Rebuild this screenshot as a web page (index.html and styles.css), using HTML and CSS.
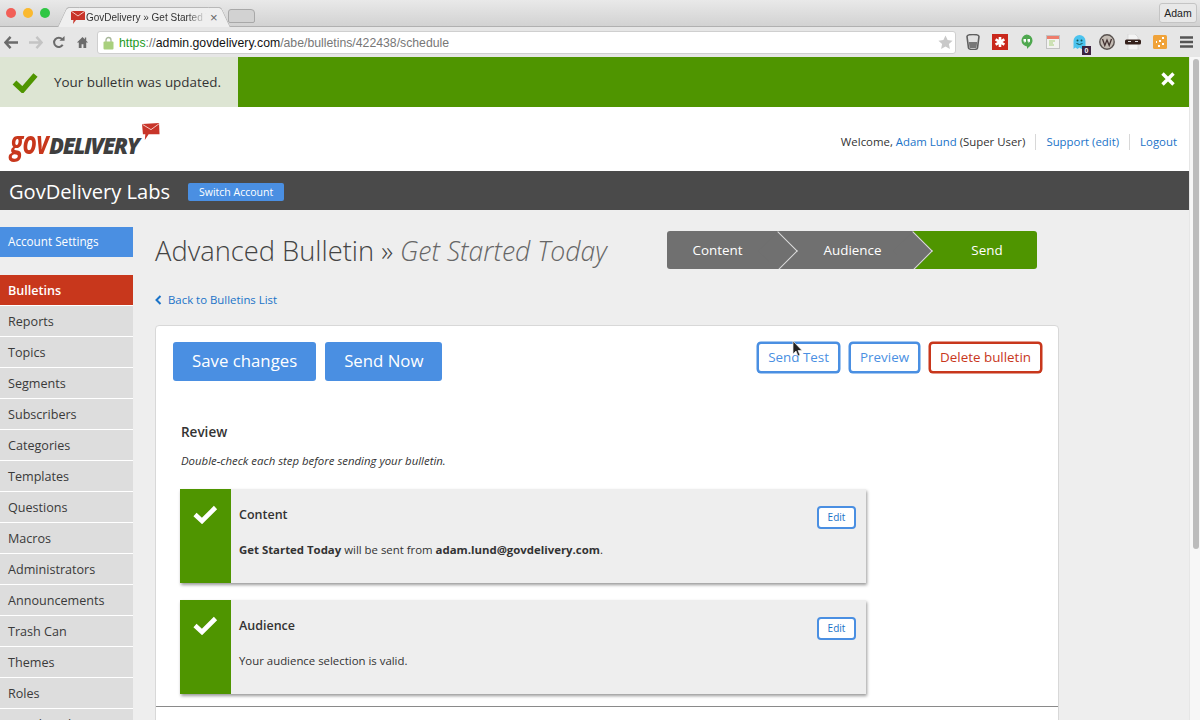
FILE: index.html
```html
<!DOCTYPE html>
<html lang="en">
<head>
<meta charset="utf-8">
<title>GovDelivery » Get Started Today</title>
<link rel="stylesheet" href="styles.css">
</head>
<body>
<div class="browser">
  <div class="tabstrip">
    <div class="lights"><i class="light red"></i><i class="light yellow"></i><i class="light green"></i></div>
    <div class="tab">
      <svg class="favicon" width="16" height="15" viewBox="0 0 16 15"><path d="M1 1h14v9H6l-3 4 .5-4H1z" fill="#c8352a"/><path d="M1 1l7 5 7-5" fill="none" stroke="#f3c9c2" stroke-width="1"/></svg>
      <span class="tabtitle">GovDelivery » Get Started T</span>
      <span class="tabclose">×</span>
    </div>
    <div class="newtab"></div>
    <div class="profile">Adam</div>
  </div>
  <div class="toolbar">
    <div class="navicons">
      <svg width="15" height="13" viewBox="0 0 16 14"><path d="M7 1L1.500 7 7 13M2 7h13" fill="none" stroke="#6b6b6b" stroke-width="2.600"/></svg>
      <svg width="15" height="13" viewBox="0 0 16 14"><path d="M9 1l5.500 6L9 13M14 7H1" fill="none" stroke="#c4c4c4" stroke-width="2.600"/></svg>
      <svg width="13" height="13" viewBox="0 0 14 14"><path d="M11.500 9.500A5 5 0 1 1 11 3.500" fill="none" stroke="#6b6b6b" stroke-width="2.200"/><path d="M8 5h5.500V0z" fill="#6b6b6b"/></svg>
      <svg width="13" height="13" viewBox="0 0 14 14"><path d="M7 1L1 7h2v6h3V9h2v4h3V7h2l-2-2V1.500H9.500V3.500z" fill="#6b6b6b"/></svg>
    </div>
    <div class="omnibox">
      <svg class="lock" width="11" height="14" viewBox="0 0 11 14"><path d="M3 6V4a2.500 2.500 0 0 1 5 0v2" fill="none" stroke="#a8b89a" stroke-width="1.300"/><rect x="0.500" y="5.500" width="10" height="8" rx="1" fill="#a9d07e"/></svg>
      <span class="url"><span class="https">https</span><span class="urlmuted">://</span>admin.govdelivery.com<span class="urlmuted">/abe/bulletins/422438/schedule</span></span>
      <svg class="star" width="15" height="15" viewBox="0 0 15 15"><path d="M7.500 .5l2.100 4.600 5 .6-3.700 3.400 1 5-4.400-2.500-4.400 2.500 1-5L.4 5.700l5-.6z" fill="#c9c9c9"/></svg>
    </div>
    <div class="extensions">
      <svg width="14" height="16" viewBox="0 0 14 16"><path d="M1 2.500a6 2 0 0 1 12 0l-1.500 11.500a4.500 1.500 0 0 1-9 0z" fill="#e2e2e2" stroke="#5f5f5f" stroke-width="1.600"/><path d="M2.800 8h8.400l-.8 6H3.600z" fill="#777"/></svg>
      <svg width="16" height="16" viewBox="0 0 16 16"><rect width="16" height="16" fill="#c9281c"/><path d="M8 3v10M3.600 5.400l8.800 5.200M12.400 5.400l-8.800 5.200" stroke="#fff" stroke-width="2.600"/></svg>
      <svg width="13" height="16" viewBox="0 0 13 16"><path d="M6.500 .5a6 6 0 0 1 6 6c0 3.500-3 6-5.500 8.500v-2.600a6 6 0 0 1 -.500-11.900z" fill="#4fa84f"/><path d="M3.500 5h2.500v2.500L4.500 9V7.500h-1zM7.500 5H10v2.500L8.500 9V7.500h-1z" fill="#fff"/></svg>
      <svg width="14" height="14" viewBox="0 0 14 14"><rect x=".5" y=".5" width="13" height="13" fill="#f2f2f0" stroke="#c2c2c2"/><rect x="1" y="1" width="12" height="3" fill="#ee7d6c"/><path d="M3 6h6M3 8h4M3 10h5" stroke="#a8d07a"/></svg>
      <span class="ghost">
        <svg width="13" height="15" viewBox="0 0 13 15"><path d="M.5 14V6a6 6 0 0 1 12 0v8l-2-1.500L8.500 14l-2-1.500-2 1.500-2-1.500z" fill="#4cc3ee"/><circle cx="4.500" cy="5.500" r="1" fill="#155"/><circle cx="8.500" cy="5.500" r="1" fill="#155"/><path d="M3.500 8.500q3 2 6 0" fill="none" stroke="#155"/></svg>
        <b class="ghostbadge">0</b>
      </span>
      <svg width="16" height="16" viewBox="0 0 16 16"><circle cx="8" cy="8" r="7.200" fill="#c4bcb4" stroke="#5a5350" stroke-width="1.400"/><path d="M3.500 5l2.300 6.500L8 6l2.200 5.500L12.500 5" fill="none" stroke="#433" stroke-width="1.300"/></svg>
      <svg width="16" height="16" viewBox="0 0 16 16"><path d="M3 0h7l3 3v13H3z" fill="#f4f4f4" stroke="#ccc" stroke-width=".6"/><rect y="5.500" width="16" height="5" rx="1.500" fill="#35211c"/><path d="M3 7.500h3M10 7.500h3" stroke="#ddd"/></svg>
      <svg width="14" height="14" viewBox="0 0 14 14"><rect width="14" height="14" rx="1.500" fill="#f0a33a"/><path d="M9 2h2v2H9zM6 5h2v2H6zM9 8h2v2H9zM5 10h2v2H5zM3 6h1v2H3z" fill="#fff"/></svg>
      <svg width="13" height="12" viewBox="0 0 13 12"><path d="M0 1.500h13M0 6h13M0 10.500h13" stroke="#555" stroke-width="2.300"/></svg>
    </div>
  </div>
</div>

<div class="viewport">
  <div class="page">
    <div class="flash">
      <div class="flashmsg">
        <svg class="flashcheck" width="26" height="21" viewBox="0 0 26 21"><path d="M2.500 10.500l8 7.500L23.500 3" fill="none" stroke="#4f9500" stroke-width="5.500"/></svg>
        <span>Your bulletin was updated.</span>
      </div>
      <svg class="flashclose" width="14" height="14" viewBox="0 0 14 14"><path d="M1.500 1.500l11 11M12.500 1.500l-11 11" stroke="#fff" stroke-width="3.400"/></svg>
    </div>

    <header class="masthead">
      <div class="logo">
        <span class="logogov">gov</span><span class="logodel">DELIVERY</span>
        <svg class="logomail" width="18" height="18" viewBox="0 0 19 19"><path d="M0 1l18-1 .5 12H7L3 18l.5-6H1z" fill="#c8352a"/><path d="M.5 1.500L9.500 7 18 .8" fill="none" stroke="#f5d3cc" stroke-width="1"/></svg>
      </div>
      <nav class="usernav">
        <span class="navitem">Welcome, <a>Adam Lund</a> (Super User)</span>
        <span class="navitem"><a>Support (edit)</a></span>
        <span class="navitem"><a>Logout</a></span>
      </nav>
    </header>

    <div class="accountbar">
      <span class="accountname">GovDelivery Labs</span>
      <span class="switch">Switch Account</span>
    </div>

    <div class="layout">
      <aside class="sidebar">
        <div class="settings">Account Settings</div>
        <ul class="menu">
          <li class="active">Bulletins</li>
          <li>Reports</li>
          <li>Topics</li>
          <li>Segments</li>
          <li>Subscribers</li>
          <li>Categories</li>
          <li>Templates</li>
          <li>Questions</li>
          <li>Macros</li>
          <li>Administrators</li>
          <li>Announcements</li>
          <li>Trash Can</li>
          <li>Themes</li>
          <li>Roles</li>
          <li>Social Media</li>
        </ul>
      </aside>
      <main class="main">
        <div class="titlerow">
          <h1 class="title">Advanced Bulletin » <em>Get Started Today</em></h1>
          <div class="steps">
            <div class="step first">Content</div>
            <div class="step second">Audience</div>
            <div class="step third">Send</div>
          </div>
        </div>
        <a class="back"><svg width="7" height="10" viewBox="0 0 7 10"><path d="M5.500 1L1.500 5l4 4" fill="none" stroke="#1a73c8" stroke-width="2"/></svg>Back to Bulletins List</a>
        <section class="panel">
          <div class="actions">
            <div class="primary">
              <span class="btn-big">Save changes</span>
              <span class="btn-big">Send Now</span>
            </div>
            <div class="secondary">
              <span class="btn-line">Send Test</span>
              <span class="btn-line">Preview</span>
              <span class="btn-line danger">Delete bulletin</span>
            </div>
          </div>
          <div class="review">
            <h2>Review</h2>
            <p class="hint">Double-check each step before sending your bulletin.</p>
            <div class="card">
              <div class="cardmark"><svg width="25" height="19" viewBox="0 0 25 19"><path d="M2 9.500l7 6.500L22.500 2.500" fill="none" stroke="#fff" stroke-width="4.600"/></svg></div>
              <div class="cardbody">
                <h3>Content</h3>
                <p><b>Get Started Today</b> will be sent from <b>adam.lund@govdelivery.com</b>.</p>
              </div>
              <span class="btn-edit">Edit</span>
            </div>
            <div class="card">
              <div class="cardmark"><svg width="25" height="19" viewBox="0 0 25 19"><path d="M2 9.500l7 6.500L22.500 2.500" fill="none" stroke="#fff" stroke-width="4.600"/></svg></div>
              <div class="cardbody">
                <h3>Audience</h3>
                <p>Your audience selection is valid.</p>
              </div>
              <span class="btn-edit">Edit</span>
            </div>
          </div>
          <div class="divider"></div>
        </section>
      </main>
    </div>
    <svg class="cursor" width="12" height="17" viewBox="0 0 12 17"><path d="M1 1v13l3-3 2 5 2-1-2-4.500h4z" fill="#222" stroke="#eee" stroke-width=".7"/></svg>
  </div>
  <div class="scrollbar"><div class="thumb"></div></div>
</div>
</body>
</html>
```
FILE: styles.css
```css
* { box-sizing: border-box; }
html, body { margin: 0; height: 720px; overflow: hidden; }
body { font-family: "Open Sans", sans-serif; color: #333; background: #eee; }
a { color: #1a73c8; text-decoration: none; }

.browser { height: 57px; background: #e4e4e4; font-family: "Liberation Sans", sans-serif; }
.tabstrip { height: 27px; display: flex; align-items: flex-end; background: linear-gradient(#e9e9e9, #d2d2d2); border-bottom: 1px solid #b0b0b0; position: relative; }
.lights { display: flex; gap: 7px; padding: 0 0 8px 6px; width: 68px; flex: none; }
.light { width: 10px; height: 10px; border-radius: 50%; display: block; }
.red { background: #f25f57; }
.yellow { background: #fab92f; }
.green { background: #2fc644; }
.tab { width: 152px; height: 20px; background: #efefef; border-top: 1px solid #b8b8b8; display: flex; align-items: center; padding-left: 2px; margin-bottom: -1px; position: relative; flex: none; }
.tab::before, .tab::after { content: ""; position: absolute; top: -1px; bottom: 0; width: 12px; background: #efefef; border-top: 1px solid #b8b8b8; z-index: 0; }
.tab::before { left: -6px; transform: skewX(-25deg); border-left: 1px solid #b8b8b8; border-radius: 3px 0 0 0; }
.tab::after { right: -6px; transform: skewX(25deg); border-right: 1px solid #b8b8b8; border-radius: 0 3px 0 0; }
.favicon { flex: none; position: relative; z-index: 1; }
.tabtitle { font-size: 10px; color: #333; white-space: nowrap; width: 123px; flex: none; position: relative; z-index: 1; -webkit-mask-image: linear-gradient(to right, #000 82%, transparent 98%); mask-image: linear-gradient(to right, #000 82%, transparent 98%); }
.tabclose { font-size: 13px; color: #666; margin-left: 1px; position: relative; z-index: 1; }
.newtab { width: 27px; height: 14px; margin: 0 0 3px 8px; background: #d2d2d2; border: 1px solid #a8a8a8; border-radius: 3px 4px 2px 2px; flex: none; }
.profile { margin-left: auto; margin-right: 3px; margin-bottom: 3px; width: 38px; height: 20px; border: 1px solid #c4c4c4; border-radius: 3px; background: #e8e8e8; font-size: 10.500px; line-height: 18px; text-align: center; color: #222; }
.toolbar { height: 30px; display: flex; align-items: center; background: #e6e6e6; }
.navicons { width: 97px; flex: none; display: flex; align-items: center; padding-left: 4px; gap: 9px; }
.navicons svg:nth-child(4) { margin-left: 2px; }
.omnibox { width: 859px; height: 23px; background: #fff; border: 1px solid #cfcfcf; border-radius: 3px; display: flex; align-items: center; padding: 0 2px 0 5px; margin-top: 1px; flex: none; }
.lock { flex: none; margin-right: 5px; }
.url { flex: 1; font-size: 12.250px; color: #111; white-space: nowrap; padding-top: 1px; }
.https { color: #1d9a1d; }
.urlmuted { color: #777; }
.extensions { display: grid; grid-template-columns: repeat(9, 26.750px); justify-items: center; align-items: center; padding-left: 3.500px; flex: none; }
.ghost { position: relative; display: block; height: 15px; width: 16px; padding-left: 1px; }
.ghostbadge { position: absolute; right: -3px; bottom: -5px; width: 9px; height: 9px; background: #3d2440; color: #fff; font-size: 7px; line-height: 9px; text-align: center; }

.viewport { display: flex; height: 663px; }
.page { flex: 1; min-width: 0; position: relative; }
.scrollbar { width: 11px; background: #f7f7f7; border-left: 1px solid #e6e6e6; padding: 2px 0 0 3px; }
.thumb { width: 6px; height: 490px; background: #bcbcbc; border-radius: 3px; }

.flash { height: 51px; background: #4f9500; border-bottom: 1px solid #fff; display: flex; align-items: center; justify-content: space-between; padding-right: 14px; }
.flashclose { margin-bottom: 6px; }
.flashmsg { width: 238px; height: 50px; background: #dde5d3; display: flex; align-items: center; padding-left: 12px; gap: 16px; font-size: 13.400px; color: #333; }
.flashcheck { flex: none; }

.masthead { height: 63px; background: #fff; display: flex; align-items: center; justify-content: space-between; padding: 4px 12px 0 10px; }
.logo { position: relative; display: flex; align-items: baseline; font-family: "Open Sans", sans-serif; font-style: italic; font-weight: 700; white-space: nowrap; margin-top: 4px; }
.logogov { display: inline-block; font-size: 32px; line-height: 32px; color: #c8371c; letter-spacing: -1px; font-weight: 700; transform: scaleX(.77); transform-origin: left; margin-right: -10.500px; }
.logodel { font-size: 22px; line-height: 32px; color: #3f3f3f; letter-spacing: -1.300px; font-weight: 800; }
.logomail { position: absolute; right: -21px; top: -3px; }
.usernav { display: flex; font-size: 11.400px; color: #333; }
.navitem { padding: 0 10px; border-left: 1px solid #d8d8d8; line-height: 16px; }
.navitem:first-child { border-left: 0; }
.navitem:last-child { padding-right: 0; }

.accountbar { height: 39px; background: #4a4a4a; display: flex; align-items: center; padding: 2px 0 0 9px; gap: 18px; }
.accountname { font-size: 20.100px; color: #fff; }
.switch { width: 96px; height: 18px; line-height: 18px; background: #4a8fe2; color: #fff; font-size: 10.500px; text-align: center; border-radius: 2px; margin-top: 1px; }

.layout { display: flex; height: 510px; overflow: hidden; background: #eee; }
.sidebar { width: 133px; flex: none; padding-top: 17px; }
.settings { height: 30px; line-height: 29px; background: #4a8fe2; color: #fff; font-size: 11.700px; font-weight: 500; padding-left: 8px; margin-bottom: 18px; }
.menu { list-style: none; margin: 0; padding: 0; }
.menu li { height: 31px; line-height: 32px; background: #ddd; border-bottom: 1px solid #fff; font-size: 12.600px; color: #3a3a3a; padding-left: 8px; }
.menu li.active { background: #c8371c; color: #fff; font-weight: 600; }

.main { flex: none; width: 925px; margin-left: 22px; padding-top: 21px; }
.titlerow { display: flex; align-items: center; height: 38px; }
.title { margin: 0; width: 512px; font-size: 27.300px; font-weight: 300; color: #444; white-space: nowrap; }
.title em { color: #666; font-size: 26.600px; }
.steps { display: flex; width: 370px; height: 38px; border-radius: 3px; overflow: hidden; font-size: 13.400px; font-weight: 400; color: #fff; }
.step { height: 38px; line-height: 38px; text-align: center; background: #707070; position: relative; }
.first { width: 111px; padding-right: 10px; z-index: 3; }
.second { width: 135px; padding-left: 14px; z-index: 2; }
.third { flex: 1; background: #4f9500; padding-left: 24px; z-index: 1; }
.first::after, .second::after { content: ""; position: absolute; top: 5.500px; right: -13.500px; width: 27px; height: 27px; transform: rotate(45deg); border-top: 1.500px solid #ddd; border-right: 1.500px solid #ddd; background: #707070; }

.back { display: flex; align-items: center; gap: 6px; margin-top: 22px; height: 17px; font-size: 11.400px; }
.back svg { flex: none; }
.panel { margin-top: 17px; width: 904px; height: 400px; background: #fff; border: 1px solid #d8d8d8; border-radius: 4px 4px 0 0; padding: 16px 0 0 17px; position: relative; }
.actions { display: flex; justify-content: space-between; align-items: flex-start; padding-right: 16px; }
.primary { display: flex; gap: 9px; }
.secondary { display: flex; gap: 9px; }
.btn-big { height: 39px; line-height: 38px; padding: 0 19px; background: #4a8fe2; color: #fff; font-size: 16.800px; border-radius: 3px; }
.btn-line { height: 31px; line-height: 27px; border: 2px solid #4a8fe2; border-radius: 4px; color: #4a8fe2; font-size: 13.400px; padding: 0 9px; background: #fff; box-shadow: 0 0 0 .5px #4a8fe2; }
.btn-line.danger { border-color: #c8371c; color: #c8371c; box-shadow: 0 0 0 .5px #c8371c; }

.review { padding: 42px 0 0 7px; }
.review h2 { margin: 0 0 0 1px; font-size: 13.500px; font-weight: 600; line-height: 18px; color: #333; }
.hint { margin: 12px 0 0 1px; font-size: 11.400px; font-style: italic; line-height: 15px; color: #333; }
.card { display: flex; width: 686px; height: 94px; margin-top: 21px; background: #eee; box-shadow: 1px 2px 3px rgba(0,0,0,.4); position: relative; }
.card + .card { margin-top: 17px; }
.cardmark { width: 51px; background: #4f9500; display: flex; justify-content: center; align-items: flex-start; padding-top: 16px; flex: none; }
.cardbody { padding: 17px 0 0 8px; font-size: 11.400px; color: #333; }
.cardbody h3 { margin: 0; font-size: 12.500px; font-weight: 600; line-height: 17px; }
.cardbody p { margin: 19px 0 0; line-height: 16px; }
.btn-edit { position: absolute; right: 10px; top: 17px; width: 39px; height: 23px; border: 2px solid #4a8fe2; border-radius: 4px; background: #fff; color: #1a73c8; font-size: 10px; line-height: 19px; text-align: center; }
.divider { position: absolute; left: 0; right: 0; top: 380px; border-top: 1px solid #8a8a8a; }
.cursor { position: absolute; left: 792px; top: 283px; }
```
